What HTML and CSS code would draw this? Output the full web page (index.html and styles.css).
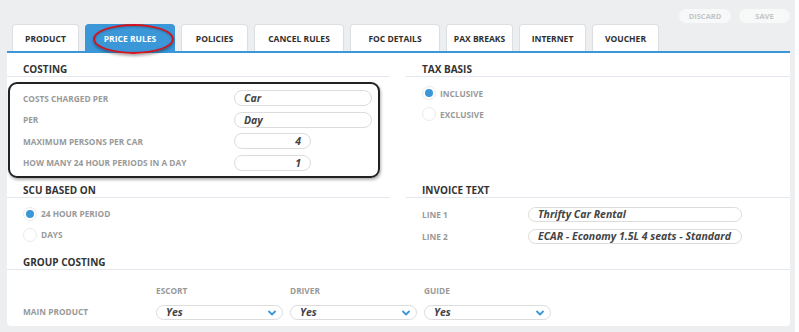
FILE: index.html
```html
<!DOCTYPE html>
<html>
<head>
<meta charset="utf-8">
<link rel="stylesheet" href="styles.css">
</head>
<body>
<div class="page">
  <div class="topbar">
    <nav class="tabs">
      <div class="tab w-s">PRODUCT</div>
      <div class="tab w-l active">PRICE RULES<span class="mark"></span></div>
      <div class="tab w-s">POLICIES</div>
      <div class="tab w-l">CANCEL RULES</div>
      <div class="tab w-l">FOC DETAILS</div>
      <div class="tab w-s">PAX BREAKS</div>
      <div class="tab w-s">INTERNET</div>
      <div class="tab w-s">VOUCHER</div>
    </nav>
    <div class="actions">
      <button class="btn btn-discard">DISCARD</button>
      <button class="btn btn-save">SAVE</button>
    </div>
  </div>

  <div class="panel">
    <div class="cols">
      <section class="col">
        <h3 class="sec-title">COSTING</h3>
        <div class="highlight">
          <div class="row"><span class="label">COSTS CHARGED PER</span><span class="field wide">Car</span></div>
          <div class="row"><span class="label">PER</span><span class="field wide">Day</span></div>
          <div class="row"><span class="label">MAXIMUM PERSONS PER CAR</span><span class="field num">4</span></div>
          <div class="row"><span class="label">HOW MANY 24 HOUR PERIODS IN A DAY</span><span class="field num">1</span></div>
        </div>
      </section>
      <section class="col">
        <h3 class="sec-title">TAX BASIS</h3>
        <div class="radios">
          <div class="radio-row"><span class="radio on"></span><span class="label">INCLUSIVE</span></div>
          <div class="radio-row"><span class="radio"></span><span class="label">EXCLUSIVE</span></div>
        </div>
      </section>
      <section class="col">
        <h3 class="sec-title tight">SCU BASED ON</h3>
        <div class="radios">
          <div class="radio-row"><span class="radio on"></span><span class="label">24 HOUR PERIOD</span></div>
          <div class="radio-row"><span class="radio"></span><span class="label">DAYS</span></div>
        </div>
      </section>
      <section class="col">
        <h3 class="sec-title tight">INVOICE TEXT</h3>
        <div class="invoice">
          <div class="inv-row"><span class="label inv-label">LINE 1</span><span class="field inv">Thrifty Car Rental</span></div>
          <div class="inv-row"><span class="label inv-label">LINE 2</span><span class="field inv">ECAR - Economy 1.5L 4 seats - Standard</span></div>
        </div>
      </section>
    </div>

    <section class="group">
      <h3 class="sec-title">GROUP COSTING</h3>
      <div class="group-grid">
        <span></span>
        <span class="label">ESCORT</span>
        <span class="label">DRIVER</span>
        <span class="label">GUIDE</span>
        <span class="label">MAIN PRODUCT</span>
        <span class="select">Yes<svg class="chev" width="8" height="6" viewBox="0 0 8 6"><path d="M1 1.5 L4 4.5 L7 1.5" fill="none" stroke="#3b97d8" stroke-width="1.8" stroke-linecap="round" stroke-linejoin="round"/></svg></span>
        <span class="select">Yes<svg class="chev" width="8" height="6" viewBox="0 0 8 6"><path d="M1 1.5 L4 4.5 L7 1.5" fill="none" stroke="#3b97d8" stroke-width="1.8" stroke-linecap="round" stroke-linejoin="round"/></svg></span>
        <span class="select">Yes<svg class="chev" width="8" height="6" viewBox="0 0 8 6"><path d="M1 1.5 L4 4.5 L7 1.5" fill="none" stroke="#3b97d8" stroke-width="1.8" stroke-linecap="round" stroke-linejoin="round"/></svg></span>
      </div>
    </section>
  </div>
</div>
</body>
</html>
```

FILE: styles.css
```css
* { box-sizing: border-box; }
html, body { margin: 0; padding: 0; background: #ffffff; }
body { font-family: "Open Sans", "Noto Sans", sans-serif; }

.page {
  width: 795px;
  height: 332px;
  background: #eceeef;
  padding: 0 5px 0 7px;
}

.topbar {
  display: flex;
  justify-content: space-between;
  align-items: flex-start;
  height: 51px;
}

.tabs {
  display: flex;
  gap: 6px;
  margin-top: 24px;
  margin-left: 5px;
}
.tab {
  position: relative;
  height: 27px;
  background: #ffffff;
  border: 1px solid #dcdfe2;
  border-bottom: none;
  border-radius: 4px 4px 0 0;
  display: flex;
  align-items: center;
  justify-content: center;
  font-size: 8.5px;
  font-weight: 700;
  color: #2f2f2f;
}
.w-s { width: 67px; }
.w-l { width: 90px; }
.tab.active {
  background: #3b97d8;
  border-color: #3b97d8;
  color: #ffffff;
}
.mark {
  position: absolute;
  left: 7px;
  top: -1px;
  width: 81px;
  height: 30px;
  border: 2px solid #d4121c;
  border-radius: 50%;
  box-shadow: 0 2px 3px rgba(0, 0, 0, 0.35), inset 0 1px 2px rgba(0, 0, 0, 0.25);
}

.actions {
  display: flex;
  gap: 8px;
  margin-top: 9px;
}
.btn {
  height: 14px;
  border: none;
  border-radius: 7px;
  background: #f7f8f8;
  color: #c3c5c7;
  font-family: inherit;
  font-size: 7.5px;
  font-weight: 700;
  padding: 0;
}
.btn-discard { width: 52px; }
.btn-save { width: 51px; }

.panel {
  width: 783px;
  height: 275px;
  background: #ffffff;
  border-top: 2px solid #3b97d8;
  border-radius: 0 0 4px 4px;
}

.cols {
  display: grid;
  grid-template-columns: 383px 384px;
  column-gap: 16px;
}

.sec-title {
  margin: 0;
  padding: 10px 16px 0;
  height: 24px;
  line-height: 13px;
  font-size: 10px;
  font-weight: 700;
  color: #333333;
  border-bottom: 1px solid #e4e7f0;
}
.sec-title.tight { padding-top: 6px; height: 20px; }

.label {
  font-size: 8.3px;
  font-weight: 700;
  color: #999999;
}

.highlight {
  margin: 5px 10px 0 1px;
  border: 2px solid #222222;
  border-radius: 9px;
  box-shadow: 1px 2px 3px rgba(0, 0, 0, 0.3);
  padding: 6px 0 5px 13px;
  display: flex;
  flex-direction: column;
  gap: 5.5px;
}
.row {
  display: flex;
  align-items: center;
  height: 16px;
}
.row .label { width: 211px; }

.field {
  height: 16px;
  border: 1px solid #dcdcdc;
  border-radius: 8px;
  font-size: 10.5px;
  font-weight: 700;
  font-style: italic;
  color: #444444;
  line-height: 14px;
  padding: 0 9px;
  white-space: nowrap;
}
.field.wide { width: 138px; }
.field.num { width: 77px; text-align: right; }

.radios {
  padding: 9px 16px 4px;
  display: flex;
  flex-direction: column;
  gap: 7px;
}
.radio-row {
  display: flex;
  align-items: center;
  gap: 4px;
  height: 14px;
}
.radio {
  width: 14px;
  height: 14px;
  border-radius: 50%;
  border: 1px solid #ebebeb;
  background: #ffffff;
  position: relative;
}
.radio.on::after {
  content: "";
  position: absolute;
  left: 2px;
  top: 2px;
  width: 8px;
  height: 8px;
  border-radius: 50%;
  background: #3b97d8;
}

.invoice {
  padding: 9px 16px 2px;
  display: flex;
  flex-direction: column;
  gap: 7px;
}
.inv-row {
  display: flex;
  align-items: center;
  height: 15px;
}
.inv-label { width: 106px; }
.field.inv { width: 214px; height: 15px; line-height: 13px; }

.group-grid {
  display: grid;
  grid-template-columns: 126px 127px 127px 127px;
  column-gap: 7px;
  row-gap: 8px;
  padding: 15px 16px 0;
  align-items: center;
}
.group-grid > .label { line-height: 12px; }
.select {
  position: relative;
  height: 15px;
  border: 1px solid #dcdcdc;
  border-radius: 8px;
  font-size: 10.5px;
  font-weight: 700;
  font-style: italic;
  color: #444444;
  line-height: 13px;
  padding: 0 9px;
}
.chev {
  position: absolute;
  right: 6px;
  top: 4px;
}
```
